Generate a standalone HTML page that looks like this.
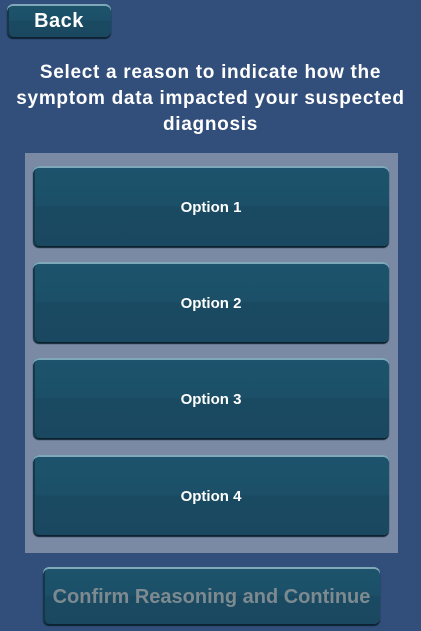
<!DOCTYPE html>
<html><head><style>
body{margin:0;width:421px;height:631px;background:#324e7b;font-family:"Liberation Sans",sans-serif;position:relative;overflow:hidden}
.btn{position:absolute;border-radius:6px;background:linear-gradient(#1d536c 0%,#1c5069 48%,#1a4a62 52%,#1a4860 100%);box-shadow:inset 0 2px 0 #7fa9b8,inset 2px 0 0 #14384a,0 2px 1px #0c2230;color:#fff;font-weight:bold;display:flex;align-items:center;justify-content:center}
.panel{position:absolute;left:25px;top:153px;width:373px;height:400px;background:#7a8aa5}
h1{position:absolute;left:0;top:60px;width:421px;margin:0;text-align:center;color:#fff;font-size:19px;line-height:26px;font-weight:bold;letter-spacing:0.7px}
.o{font-size:15px;padding-top:3px;box-sizing:border-box}
</style></head><body>
<div class="btn" style="left:7px;top:4px;width:104px;height:33px;font-size:20px;letter-spacing:0.5px;padding-top:2px;box-sizing:border-box">Back</div>
<h1>Select a reason to indicate how the<br>symptom data impacted your suspected<br>diagnosis</h1>
<div class="panel"></div>
<div class="btn o" style="left:33px;top:166px;width:356px;height:80px">Option 1</div>
<div class="btn o" style="left:33px;top:262px;width:356px;height:80px">Option 2</div>
<div class="btn o" style="left:33px;top:358px;width:356px;height:80px">Option 3</div>
<div class="btn o" style="left:33px;top:455px;width:356px;height:80px">Option 4</div>
<div class="btn" style="left:43px;top:567px;width:337px;height:57px;font-size:20px;letter-spacing:0px;padding-top:4px;box-sizing:border-box;color:#7d8a90">Confirm Reasoning and Continue</div>
</body></html>
